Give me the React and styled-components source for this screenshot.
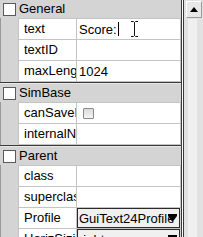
import React from "react";
import styled, { createGlobalStyle } from "styled-components";

const Global = createGlobalStyle`
    html, body {
        margin: 0;
        padding: 0;
        background: #d4d4d4;
        overflow: hidden;
    }
    body {
        font-family: "Liberation Sans", Arial, sans-serif;
        font-size: 13px;
        color: #000;
    }
`;

const groups = [
    {
        title: "General",
        rows: [
            { label: "text", value: "Score:", caret: true },
            { label: "textID", value: "" },
            { label: "maxLength", value: "1024" },
        ],
    },
    {
        title: "SimBase",
        rows: [
            { label: "canSaveDynamicFields", check: true },
            { label: "internalName", value: "" },
        ],
    },
    {
        title: "Parent",
        rows: [
            { label: "class", value: "" },
            { label: "superclass", value: "" },
            { label: "Profile", value: "GuiText24Profile", select: true },
            { label: "HorizSizing", value: "right", select: true },
        ],
    },
];

const DownArrow = () => (
    <svg width="9" height="8" viewBox="0 0 9 8">
        <rect x="0" y="0" width="9" height="2" fill="#000" />
        <path d="M0 2 L9 2 L4.5 8 Z" fill="#000" />
    </svg>
);

const App = () => {
    return (
        <Frame>
            <Global />
            <Inspector>
                {groups.map((group, i) => (
                    <Group key={group.title} first={i === 0}>
                        <Header>
                            <Box />
                            <span>{group.title}</span>
                        </Header>
                        <Table>
                            {group.rows.map((row) => (
                                <Row key={row.label}>
                                    <Label>{row.label}</Label>
                                    {row.select ? (
                                        <Select>
                                            <span className="title">{row.value}</span>
                                            <Arrow>
                                                <DownArrow />
                                            </Arrow>
                                        </Select>
                                    ) : (
                                        <Value>
                                            {row.check ? (
                                                <SmallCheck />
                                            ) : (
                                                <>
                                                    {row.value}
                                                    {row.caret && <Caret />}
                                                </>
                                            )}
                                        </Value>
                                    )}
                                </Row>
                            ))}
                        </Table>
                    </Group>
                ))}
            </Inspector>
            <Scrollbar>
                <UpButton>
                    <svg width="8" height="5" viewBox="0 0 8 5">
                        <path d="M0 5 L4 0 L8 5 Z" fill="#000" />
                    </svg>
                </UpButton>
                <Track />
            </Scrollbar>
            <IBeam>
                <svg width="9" height="16" viewBox="0 0 9 16">
                    <path d="M1 0.5 H3.5 L4.5 1.5 L5.5 0.5 H8 M4.5 1.5 V14.5 M1 15.5 H3.5 L4.5 14.5 L5.5 15.5 H8" stroke="#111" strokeWidth="1" fill="none" />
                </svg>
            </IBeam>
        </Frame>
    );
};

export default App;

const Frame = styled.div`
    position: relative;
    display: flex;
    width: 203px;
    height: 237px;
    overflow: hidden;
    background: #d4d4d4;
    box-shadow: inset 1px 0 0 #9a9a9a;
`;

const Inspector = styled.div`
    width: 181px;
    flex-shrink: 0;
    border-right: 1px solid #3a3a3a;
    display: flex;
    flex-direction: column;
`;

const Group = styled.div`
    border-top: ${(p) => (p.first ? "none" : "1px solid #3a3a3a")};
    box-shadow: ${(p) => (p.first ? "none" : "inset 0 1px 0 #e8e8e8")};
    padding-top: ${(p) => (p.first ? "0" : "1px")};
`;

const Header = styled.div`
    height: 18px;
    display: flex;
    align-items: center;
    gap: 3px;
    padding-left: 3px;
    background: #d4d4d4;
    line-height: 18px;
`;

const Box = styled.span`
    width: 11px;
    height: 11px;
    background: #fff;
    border: 1px solid #5a5a5a;
    flex-shrink: 0;
`;

const Table = styled.div`
    margin-left: 18px;
    border-top: 1px solid #c4c4c4;
    border-left: 1px solid #c4c4c4;
`;

const Row = styled.div`
    display: flex;
    height: 20px;
    border-bottom: 1px solid #c4c4c4;
`;

const Label = styled.div`
    width: 52px;
    padding-left: 5px;
    background: #fff;
    border-right: 1px solid #c4c4c4;
    line-height: 20px;
    white-space: nowrap;
    overflow: hidden;
    flex-shrink: 0;
`;

const Value = styled.div`
    flex: 1;
    display: flex;
    align-items: center;
    padding-left: 2px;
    background: #fff;
    border-right: 1px solid #c4c4c4;
    white-space: nowrap;
    overflow: hidden;
`;

const Caret = styled.span`
    width: 1px;
    height: 14px;
    background: #000;
    margin-left: 1px;
`;

const IBeam = styled.div`
    position: absolute;
    left: 130px;
    top: 21px;
    width: 9px;
    height: 16px;
    pointer-events: none;
`;

const SmallCheck = styled.span`
    width: 9px;
    height: 9px;
    margin-left: 4px;
    border: 1px solid #8a8a8a;
    background: linear-gradient(#dcdcdc, #f4f4f4);
    border-radius: 1px;
`;

const Select = styled.div`
    flex: 1;
    position: relative;
    display: flex;
    align-items: center;
    background: #f0f0f0;
    border: 1px solid #2a2a2a;
    margin: 0 1px 0 0;
    overflow: hidden;

    span.title {
        flex: 1;
        padding-left: 1px;
        white-space: nowrap;
        overflow: hidden;
    }
`;

const Arrow = styled.span`
    position: absolute;
    right: 2px;
    top: 5px;
    display: flex;
    background: transparent;
`;

const Scrollbar = styled.div`
    flex: 1;
    display: flex;
    flex-direction: column;
    background: #e2e2e2;
    border-left: 1px solid #fff;
    box-shadow: inset 1px 0 0 #3a3a3a;
    padding: 1px 1px 0 3px;
`;

const UpButton = styled.div`
    height: 15px;
    display: flex;
    align-items: center;
    justify-content: center;
    background: #e8e8e8;
    border: 1px solid #9a9a9a;
    border-top-color: #fff;
    border-left-color: #fff;
`;

const Track = styled.div`
    flex: 1;
    margin: 1px 5px 0 2px;
    background: #f0f0f0;
`;
